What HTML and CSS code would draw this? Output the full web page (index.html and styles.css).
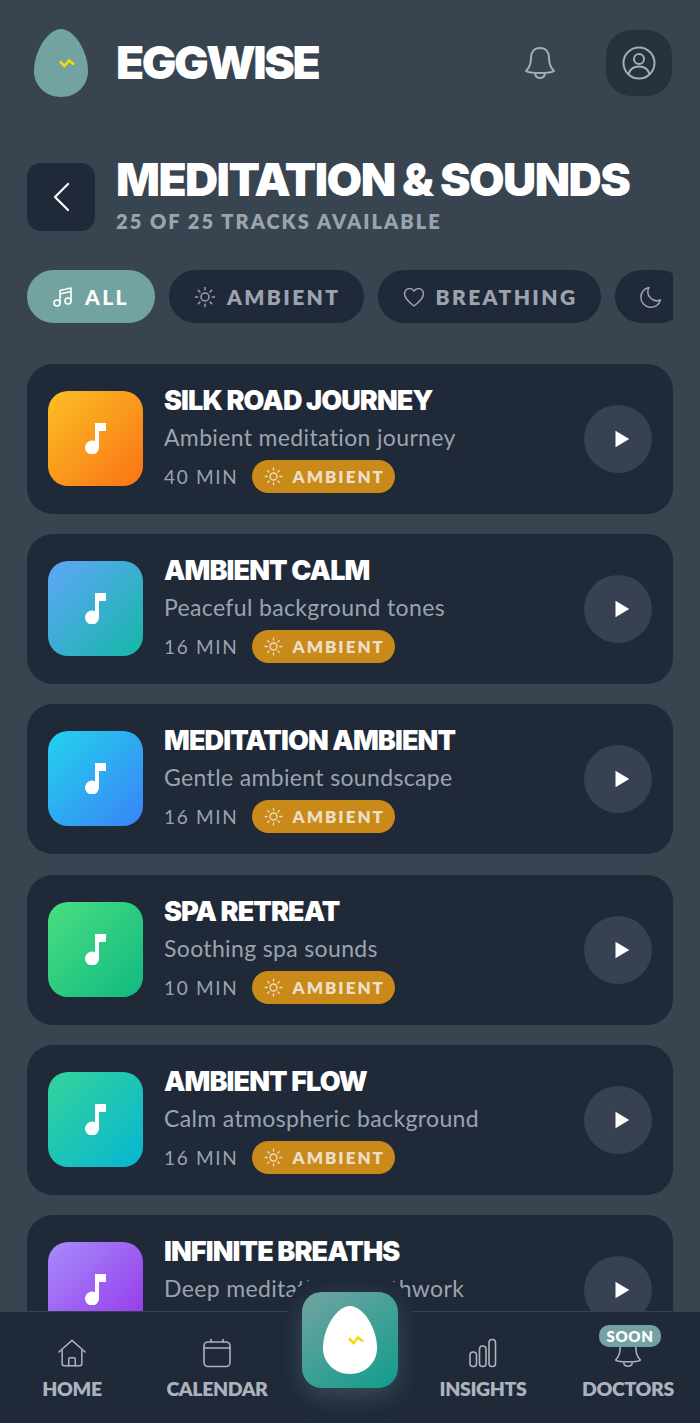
FILE: index.html
```html
<!DOCTYPE html>
<html lang="en">
<head>
  <meta charset="UTF-8" />
  <title>Eggwise - Meditation &amp; Sounds</title>
  <link rel="stylesheet" href="styles.css">
</head>
<body>
  <svg class="defs" width="0" height="0">
    <symbol id="sun" viewBox="0 0 24 24" fill="none" stroke="currentColor" stroke-width="1.5" stroke-linecap="round">
      <circle cx="12" cy="12" r="4"/>
      <path d="M12 2.5v2.2M12 19.3v2.2M2.5 12h2.2M19.3 12h2.2M5.3 5.3l1.6 1.6M17.1 17.1l1.6 1.6M5.3 18.7l1.6-1.6M17.1 6.9l1.6-1.6"/>
    </symbol>
    <symbol id="note" viewBox="0 0 21 31" fill="#fff">
      <path d="M10 0H21V8H14V24A7 7 0 1 1 10 18.200z"/>
    </symbol>
    <symbol id="play" viewBox="0 0 24 24" fill="#fff">
      <path d="M6 3l15 9-15 9z"/>
    </symbol>
  </svg>

  <div class="app">
    <header class="topbar">
      <div class="brand">
        <svg class="logo" viewBox="0 0 54 68">
          <path d="M27 0C40 0 54 22 54 42 54 57 42 68 27 68 12 68 0 57 0 42 0 22 14 0 27 0z" fill="#73a3a1"/>
          <path d="M26 32.500l4.500 4.500 4.500-5.500 5 4" fill="none" stroke="#f5d90a" stroke-width="2.600"/>
        </svg>
        <span class="brand-name">EGGWISE</span>
      </div>
      <div class="top-actions">
        <svg class="bell" viewBox="0 0 32 34" fill="none" stroke="#a3acb9" stroke-width="2" stroke-linejoin="round">
          <path d="M16 2c-6 0-9 4.500-9 10 0 7-2 10-5 13 2 1.500 6 2 14 2s12-.5 14-2c-3-3-5-6-5-13 0-5.500-3-10-9-10z"/>
          <path d="M11 27.500c.5 3 2.500 4.500 5 4.500s4.500-1.500 5-4.500"/>
        </svg>
        <button class="profile">
          <svg viewBox="0 0 34 34" fill="none" stroke="#a3acb9" stroke-width="2">
            <circle cx="17" cy="17" r="15.500"/>
            <circle cx="17" cy="13" r="5"/>
            <path d="M6.500 28c1.500-5 5.500-7.500 10.500-7.500s9 2.500 10.500 7.500"/>
          </svg>
        </button>
      </div>
    </header>

    <section class="page-head">
      <button class="back">
        <svg viewBox="0 0 18 30" fill="none" stroke="#fff" stroke-width="2.200" stroke-linecap="round" stroke-linejoin="round"><path d="M16 2L3 15l13 13"/></svg>
      </button>
      <div>
        <h1>MEDITATION &amp; SOUNDS</h1>
        <p class="count">25 OF 25 TRACKS AVAILABLE</p>
      </div>
    </section>

    <nav class="filters">
      <button class="chip active">
        <svg viewBox="0 0 24 24" fill="none" stroke="currentColor" stroke-width="1.600" stroke-linejoin="round"><path d="M9 18V5.500L20 3v13"/><path d="M9 9l11-2.500"/><circle cx="6" cy="18" r="3"/><circle cx="17" cy="16" r="3"/></svg>
        ALL
      </button>
      <button class="chip"><svg><use href="#sun"/></svg>AMBIENT</button>
      <button class="chip">
        <svg viewBox="0 0 24 24" fill="none" stroke="currentColor" stroke-width="1.500" stroke-linejoin="round"><path d="M12 21C6 16.500 2.500 13 2.500 8.800 2.500 5.800 4.800 3.500 7.600 3.500c1.800 0 3.400 1 4.400 2.600 1-1.600 2.600-2.600 4.400-2.600 2.800 0 5.100 2.300 5.100 5.300C21.500 13 18 16.500 12 21z"/></svg>
        BREATHING
      </button>
      <button class="chip">
        <svg viewBox="0 0 24 24" fill="none" stroke="currentColor" stroke-width="1.500" stroke-linejoin="round"><path d="M10 2.500A10 10 0 1 0 21.500 15 9 9 0 0 1 10 2.500z"/></svg>
      </button>
    </nav>

    <main class="tracks">
      <article class="track">
        <div class="cover orange"><svg><use href="#note"/></svg></div>
        <div class="info">
          <h2>SILK ROAD JOURNEY</h2>
          <p class="desc">Ambient meditation journey</p>
          <div class="meta"><span class="mins">40 MIN</span><span class="tag"><svg><use href="#sun"/></svg>AMBIENT</span></div>
        </div>
        <button class="play"><svg><use href="#play"/></svg></button>
      </article>
      <article class="track">
        <div class="cover blue"><svg><use href="#note"/></svg></div>
        <div class="info">
          <h2>AMBIENT CALM</h2>
          <p class="desc">Peaceful background tones</p>
          <div class="meta"><span class="mins">16 MIN</span><span class="tag"><svg><use href="#sun"/></svg>AMBIENT</span></div>
        </div>
        <button class="play"><svg><use href="#play"/></svg></button>
      </article>
      <article class="track">
        <div class="cover sky"><svg><use href="#note"/></svg></div>
        <div class="info">
          <h2>MEDITATION AMBIENT</h2>
          <p class="desc">Gentle ambient soundscape</p>
          <div class="meta"><span class="mins">16 MIN</span><span class="tag"><svg><use href="#sun"/></svg>AMBIENT</span></div>
        </div>
        <button class="play"><svg><use href="#play"/></svg></button>
      </article>
      <article class="track">
        <div class="cover green"><svg><use href="#note"/></svg></div>
        <div class="info">
          <h2>SPA RETREAT</h2>
          <p class="desc">Soothing spa sounds</p>
          <div class="meta"><span class="mins">10 MIN</span><span class="tag"><svg><use href="#sun"/></svg>AMBIENT</span></div>
        </div>
        <button class="play"><svg><use href="#play"/></svg></button>
      </article>
      <article class="track">
        <div class="cover teal"><svg><use href="#note"/></svg></div>
        <div class="info">
          <h2>AMBIENT FLOW</h2>
          <p class="desc">Calm atmospheric background</p>
          <div class="meta"><span class="mins">16 MIN</span><span class="tag"><svg><use href="#sun"/></svg>AMBIENT</span></div>
        </div>
        <button class="play"><svg><use href="#play"/></svg></button>
      </article>
      <article class="track">
        <div class="cover purple"><svg><use href="#note"/></svg></div>
        <div class="info">
          <h2>INFINITE BREATHS</h2>
          <p class="desc">Deep meditation breathwork</p>
          <div class="meta"><span class="mins">12 MIN</span><span class="tag"><svg><use href="#sun"/></svg>BREATHING</span></div>
        </div>
        <button class="play"><svg><use href="#play"/></svg></button>
      </article>
    </main>

    <footer class="tabbar">
      <a class="tab">
        <svg viewBox="0 0 32 30" fill="none" stroke="currentColor" stroke-width="1.600" stroke-linejoin="round" stroke-linecap="round"><path d="M2 14L16 1.500 30 14"/><path d="M5.500 12v14.500a2 2 0 0 0 2 2h17a2 2 0 0 0 2-2V12"/><path d="M12.500 28.500v-7a1.500 1.500 0 0 1 1.500-1.500h4a1.500 1.500 0 0 1 1.500 1.500v7"/></svg>
        HOME
      </a>
      <a class="tab">
        <svg viewBox="0 0 30 30" fill="none" stroke="currentColor" stroke-width="1.600" stroke-linecap="round"><rect x="2" y="4" width="26" height="24.500" rx="4"/><path d="M2 10h26M9 1.500V4M21 1.500V4"/></svg>
        CALENDAR
      </a>
      <div class="tab-spacer"></div>
      <a class="tab">
        <svg viewBox="0 0 30 30" fill="none" stroke="currentColor" stroke-width="1.600"><rect x="2" y="14" width="6.500" height="14.500" rx="3"/><rect x="11.500" y="8" width="6.500" height="20.500" rx="3"/><rect x="21" y="1.500" width="6.500" height="27" rx="3"/></svg>
        INSIGHTS
      </a>
      <a class="tab">
        <svg viewBox="0 0 32 34" fill="none" stroke="currentColor" stroke-width="1.800" stroke-linejoin="round"><path d="M16 2c-6 0-9 4.500-9 10 0 7-2 10-5 13 2 1.500 6 2 14 2s12-.5 14-2c-3-3-5-6-5-13 0-5.500-3-10-9-10z"/><path d="M11 27.500c.5 3 2.500 4.500 5 4.500s4.500-1.500 5-4.500"/></svg>
        DOCTORS
        <span class="soon">SOON</span>
      </a>
    </footer>

    <button class="egg-btn">
      <svg viewBox="0 0 54 68">
        <path d="M27 0C40 0 54 22 54 42 54 57 42 68 27 68 12 68 0 57 0 42 0 22 14 0 27 0z" fill="#fff"/>
        <path d="M26 32.500l4.500 4.500 4.500-5.500 5 4" fill="none" stroke="#f5d90a" stroke-width="2.600"/>
      </svg>
    </button>
  </div>
</body>
</html>
```

FILE: styles.css
```css
* {
  box-sizing: border-box;
}
body {
  margin: 0;
  font-family: Lato, "Open Sans", sans-serif;
  background-color: #384551;
  color: #fff;
}
button {
  border: none;
  padding: 0;
  font-family: inherit;
}
.defs {
  position: absolute;
}
.app {
  position: relative;
  height: 1423px;
  overflow: hidden;
  padding: 29px 27px 0;
}

/* top bar */
.topbar {
  display: flex;
  justify-content: space-between;
  align-items: center;
  height: 68px;
}
.brand {
  display: flex;
  align-items: center;
  gap: 28px;
  padding-left: 7px;
}
.logo {
  width: 54px;
  height: 68px;
}
.brand-name {
  font-family: Inter, sans-serif;
  font-weight: 900;
  font-size: 46px;
  letter-spacing: -2.500px;
  padding-bottom: 2px;
}
.top-actions {
  display: flex;
  align-items: center;
  gap: 50px;
  padding-right: 1px;
}
.bell {
  width: 32px;
  height: 34px;
}
.profile {
  width: 66px;
  height: 66px;
  border-radius: 25px;
  background: #27323f;
  display: flex;
  align-items: center;
  justify-content: center;
}
.profile svg {
  width: 34px;
  height: 34px;
}

/* page heading */
.page-head {
  display: flex;
  align-items: flex-start;
  gap: 21px;
  margin-top: 66px;
}
.back {
  width: 68px;
  height: 68px;
  border-radius: 14px;
  background: #1f2937;
  display: flex;
  align-items: center;
  justify-content: center;
}
.back svg {
  width: 18px;
  height: 30px;
}
h1 {
  margin: -8px 0 0;
  font-family: Inter, sans-serif;
  font-weight: 900;
  font-size: 46px;
  line-height: 48px;
  letter-spacing: -1.600px;
  white-space: nowrap;
}
.count {
  margin: 6px 0 0;
  font-size: 20px;
  line-height: 24px;
  font-weight: 800;
  letter-spacing: 2.050px;
  color: #9ca3af;
  white-space: nowrap;
}

/* filter chips */
.filters {
  display: flex;
  gap: 14px;
  margin-top: 37px;
  overflow: hidden;
}
.chip {
  flex: none;
  height: 53px;
  padding: 0 23px 0 24px;
  border-radius: 27px;
  background: #1f2937;
  color: #9ca3af;
  display: flex;
  align-items: center;
  gap: 10px;
  font-size: 21px;
  font-weight: 800;
  letter-spacing: 2.400px;
}
.chip svg {
  width: 24px;
  height: 24px;
}
.chip.active {
  background: #73a3a1;
  color: #fff;
  font-weight: 900;
  padding-right: 26px;
}

/* track list */
.tracks {
  display: flex;
  flex-direction: column;
  gap: 20.200px;
  margin-top: 41px;
}
.track {
  display: flex;
  align-items: center;
  height: 150px;
  padding: 0 21px;
  border-radius: 26px;
  background: #1f2937;
}
.cover {
  flex: none;
  width: 95px;
  height: 95px;
  margin-bottom: 1px;
  border-radius: 20px;
  display: flex;
  align-items: center;
  justify-content: center;
}
.cover svg {
  width: 21px;
  height: 31px;
}
.orange { background: linear-gradient(135deg, #fbbf24, #f97316); }
.blue { background: linear-gradient(135deg, #60a5fa, #14b8a6); }
.sky { background: linear-gradient(135deg, #22d3ee, #3b82f6); }
.green { background: linear-gradient(135deg, #4ade80, #10b981); }
.teal { background: linear-gradient(135deg, #34d399, #06b6d4); }
.purple { background: linear-gradient(135deg, #a78bfa, #9333ea); }
.info {
  flex: 1;
  min-width: 0;
  margin-left: 21px;
}
h2 {
  margin: 0;
  font-family: Inter, sans-serif;
  font-weight: 900;
  font-size: 27px;
  line-height: 32px;
  letter-spacing: -.9px;
  white-space: nowrap;
}
.desc {
  margin: 5px 0 0;
  font-size: 23px;
  line-height: 30px;
  letter-spacing: .35px;
  color: #9ca3af;
  white-space: nowrap;
}
.meta {
  display: flex;
  align-items: center;
  gap: 13px;
  margin-top: 8px;
}
.mins {
  font-size: 19px;
  letter-spacing: 1.700px;
  color: #9ca3af;
}
.tag {
  display: flex;
  align-items: center;
  gap: 9px;
  height: 33px;
  padding: 0 10px 0 11px;
  border-radius: 17px;
  background: #ca8a1a;
  color: #ecdfc8;
  font-size: 17px;
  font-weight: 800;
  letter-spacing: 2px;
}
.tag svg {
  width: 21px;
  height: 21px;
}
.play {
  flex: none;
  width: 68px;
  height: 68px;
  border-radius: 50%;
  background: #374151;
  display: flex;
  align-items: center;
  justify-content: center;
}
.play svg {
  width: 22px;
  height: 22px;
  margin-left: 5px;
}

/* bottom nav */
.tabbar {
  position: absolute;
  left: 0;
  right: 0;
  bottom: 0;
  height: 112px;
  display: flex;
  gap: 35px;
  padding: 0 17px;
  background: #1f2937;
  border-top: 1px solid #374151;
}
.tab {
  position: relative;
  width: 110px;
  display: flex;
  flex-direction: column;
  align-items: center;
  gap: 9px;
  padding-top: 26px;
  font-size: 19.500px;
  font-weight: 800;
  letter-spacing: -.4px;
  color: #adb3be;
}
.tab svg {
  width: 30px;
  height: 30px;
}
.tab-spacer {
  flex: 1;
}
.soon {
  position: absolute;
  top: 13px;
  left: 57px;
  transform: translateX(-50%);
  width: 62px;
  height: 22px;
  border-radius: 10px;
  background: #73a3a1;
  color: #fff;
  font-size: 15px;
  line-height: 22px;
  letter-spacing: .6px;
  text-align: center;
}
.egg-btn {
  position: absolute;
  left: 302px;
  top: 1292px;
  width: 96px;
  height: 96px;
  border-radius: 20px;
  background: linear-gradient(145deg, #73a3a1, #0f9d8c);
  box-shadow: 0 8px 24px rgba(115, 163, 161, .3), 0 0 0 14px #1f2937;
  display: flex;
  align-items: center;
  justify-content: center;
}
.egg-btn svg {
  width: 54px;
  height: 68px;
}
```
